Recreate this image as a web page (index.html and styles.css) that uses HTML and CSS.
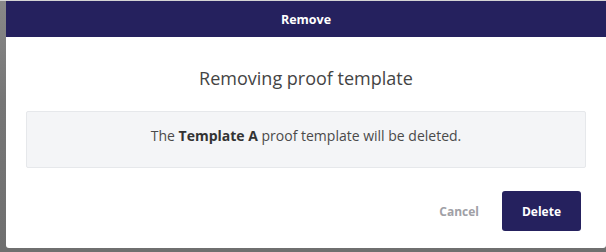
FILE: index.html
```html
<!DOCTYPE html>
<html>
<head>
<meta charset="utf-8">
<link rel="stylesheet" href="styles.css">
</head>
<body>
<div class="topline"></div>
<div class="stage">
  <div class="modal">
    <div class="modal-header">Remove</div>
    <div class="modal-body">
      <h2 class="title">Removing proof template</h2>
      <div class="notice">The <strong>Template A</strong> proof template will be deleted.</div>
    </div>
    <div class="modal-footer">
      <button class="btn btn-cancel">Cancel</button>
      <button class="btn btn-delete">Delete</button>
    </div>
  </div>
</div>
</body>
</html>
```
FILE: styles.css
```css
* { box-sizing: border-box; }
html, body { margin: 0; padding: 0; }
body {
  width: 606px;
  height: 252px;
  overflow: hidden;
  background: #727272;
  font-family: "Open Sans", "Liberation Sans", sans-serif;
}
.topline { height: 1px; background: #d4d4d4; }
.stage {
  padding-left: 6px;
  background: linear-gradient(to bottom, #888 0%, #767676 40%, #6f6f6f 100%);
  height: 251px;
}
.modal {
  width: 600px;
  height: 247px;
  background: #fff;
  border-radius: 0 0 3px 3px;
  display: flex;
  flex-direction: column;
}
.modal-header {
  height: 36px;
  background: #25215e;
  color: #fff;
  font-weight: 700;
  font-size: 12.5px;
  display: flex;
  align-items: center;
  justify-content: center;
}
.modal-body {
  padding: 28px 20px 0;
}
.title {
  margin: 0;
  font-size: 18px;
  font-weight: 400;
  line-height: 26px;
  color: #444;
  text-align: center;
}
.notice {
  margin-top: 20px;
  background: #f4f5f7;
  border: 1px solid #e6e8eb;
  border-radius: 2px;
  padding: 16px 20px 24px;
  font-size: 14px;
  line-height: 15px;
  color: #4a4a4a;
  text-align: center;
}
.notice strong { color: #333; font-weight: 700; }
.modal-footer {
  margin-top: 23px;
  padding-right: 25px;
  display: flex;
  justify-content: flex-end;
  align-items: center;
  gap: 23px;
}
.btn {
  font-family: inherit;
  font-weight: 700;
  font-size: 12px;
  border: none;
  cursor: pointer;
}
.btn-cancel {
  background: none;
  color: #a0a0a6;
  padding: 0;
}
.btn-delete {
  width: 79px;
  height: 40px;
  background: #25215e;
  color: #fff;
  border-radius: 3px;
}
```
